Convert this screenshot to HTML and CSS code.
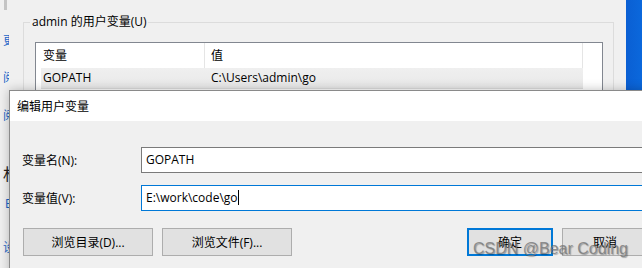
FILE: index.html
```html
<!DOCTYPE html>
<html lang="zh-CN">
<head>
    <meta charset="UTF-8">
    <meta name="viewport" content="width=device-width, initial-scale=1.0">
    <title>编辑用户变量</title>
    <link rel="stylesheet" href="styles.css">
</head>
<body>
    <div class="screen">
        <div class="bg-window">
            <div class="side">
                <div class="thumb"></div>
                <div class="side-char c1">更</div>
                <div class="side-char c2">阅</div>
                <div class="side-char c3">阅</div>
                <div class="side-char c4 dark">材</div>
                <div class="side-char c5">E</div>
                <div class="side-char c6">设</div>
            </div>
            <div class="bg-main">
                <fieldset class="group">
                    <legend>admin 的用户变量(U)</legend>
                    <div class="listview">
                        <div class="lv-header">
                            <div class="col-name">变量</div>
                            <div class="col-value">值</div>
                        </div>
                        <div class="lv-row">
                            <div class="col-name">GOPATH</div>
                            <div class="col-value">C:\Users\admin\go</div>
                        </div>
                    </div>
                </fieldset>
            </div>
            <div class="wallpaper"></div>
        </div>

        <div class="dialog">
            <div class="titlebar">
                <span class="title">编辑用户变量</span>
                <span class="close">✕</span>
            </div>
            <div class="dialog-body">
                <div class="field">
                    <label>变量名(N):</label>
                    <div class="textbox">GOPATH</div>
                </div>
                <div class="field">
                    <label>变量值(V):</label>
                    <div class="textbox focused">E:\work\code\go<span class="caret"></span></div>
                </div>
                <div class="buttons">
                    <button class="btn wide">浏览目录(D)...</button>
                    <button class="btn wide">浏览文件(F)...</button>
                    <button class="btn default">确定</button>
                    <button class="btn">取消</button>
                </div>
            </div>
        </div>

        <div class="watermark">CSDN @Bear Coding</div>
    </div>
</body>
</html>
```

FILE: styles.css
```css
body { margin: 0; background: #f0f0f0; font-family: "Open Sans", "Noto Sans CJK SC", sans-serif; font-size: 12px; color: #000; }
.screen { position: relative; width: 642px; height: 268px; overflow: hidden; }

/* window behind the dialog */
.bg-window { display: flex; height: 268px; }
.side { width: 9px; flex: none; overflow: hidden; display: flex; flex-direction: column; }
.thumb { width: 3px; height: 10px; margin-left: 4px; background: #c4c4c4; flex: none; }
.side-char { margin-left: 3px; line-height: 16px; color: #1a66c8; font-family: "Noto Sans CJK SC", sans-serif; white-space: nowrap; }
.side-char.dark { color: #222; font-size: 16px; line-height: 18px; }
.c1 { margin-top: 22px; }
.c2 { margin-top: 21px; }
.c3 { margin-top: 22px; }
.c4 { margin-top: 41px; }
.c5 { margin-top: 14px; margin-left: 5px; font-family: "Open Sans", sans-serif; }
.c6 { margin-top: 27px; }

.bg-main { flex: 1; padding-top: 14px; }
.group { margin: 0 12px 0 14px; padding: 0 10px 0 11px; border: 1px solid #dcdcdc; height: 200px; }
.group legend { margin-left: -5px; padding: 0 2px; line-height: 16px; }
.listview { margin-top: 12px; height: 80px; border: 1px solid #828790; background: #fff; padding-left: 5px; }
.lv-header { display: flex; height: 25px; align-items: center; }
.lv-header .col-name { width: 161px; padding-left: 2px; height: 100%; line-height: 25px; border-right: 1px solid #e5e5e5; }
.lv-header .col-value { width: 371px; padding-left: 6px; height: 100%; line-height: 25px; border-right: 1px solid #e5e5e5; }
.lv-row { display: flex; width: 542px; height: 20px; line-height: 20px; background: linear-gradient(#efefef, #e9e9e9); border-bottom: 1px solid #dedede; }
.lv-row .col-name { width: 161px; padding-left: 2px; }
.lv-row .col-value { padding-left: 7px; }
.wallpaper { width: 16px; flex: none; background: linear-gradient(90deg, #0a5fd3, #0b68dc); }

/* dialog */
.dialog { position: absolute; left: 9px; top: 90px; width: 660px; height: 200px; box-sizing: border-box; border: 1px solid #8a8a8a; background: #f0f0f0; box-shadow: 0 0 10px rgba(0, 0, 0, 0.25); }
.titlebar { display: flex; justify-content: space-between; align-items: center; height: 30px; background: #fff; padding-left: 7px; }
.close { width: 46px; text-align: left; padding-left: 21px; box-sizing: border-box; font-family: "DejaVu Sans", sans-serif; font-size: 11px; }
.dialog-body { padding: 26px 12px 0 12px; }
.field { display: flex; align-items: center; margin-bottom: 12px; }
.field label { width: 119px; flex: none; }
.textbox { flex: 1; height: 26px; box-sizing: border-box; border: 1px solid #7a7a7a; background: #fff; padding-left: 4px; line-height: 24px; }
.textbox.focused { border-color: #0078d7; }
.caret { display: inline-block; width: 1px; height: 15px; background: #000; vertical-align: -3px; }

.buttons { display: flex; gap: 9px; margin-top: 17px; padding-left: 1px; margin-right: 8px; }
.btn { height: 28px; width: 86px; border: 1px solid #adadad; background: #e1e1e1; font-family: inherit; font-size: 12px; padding: 0; color: #000; }
.btn.wide { width: 130px; }
.btn.default { margin-left: auto; border: 2px solid #0078d7; }

.watermark { position: absolute; left: 473px; top: 240px; font-family: "Liberation Sans", Arial, sans-serif; font-size: 16px; color: rgba(120, 120, 120, 0.8); text-shadow: 1px 1px 1px rgba(0, 0, 0, 0.3); }
```
